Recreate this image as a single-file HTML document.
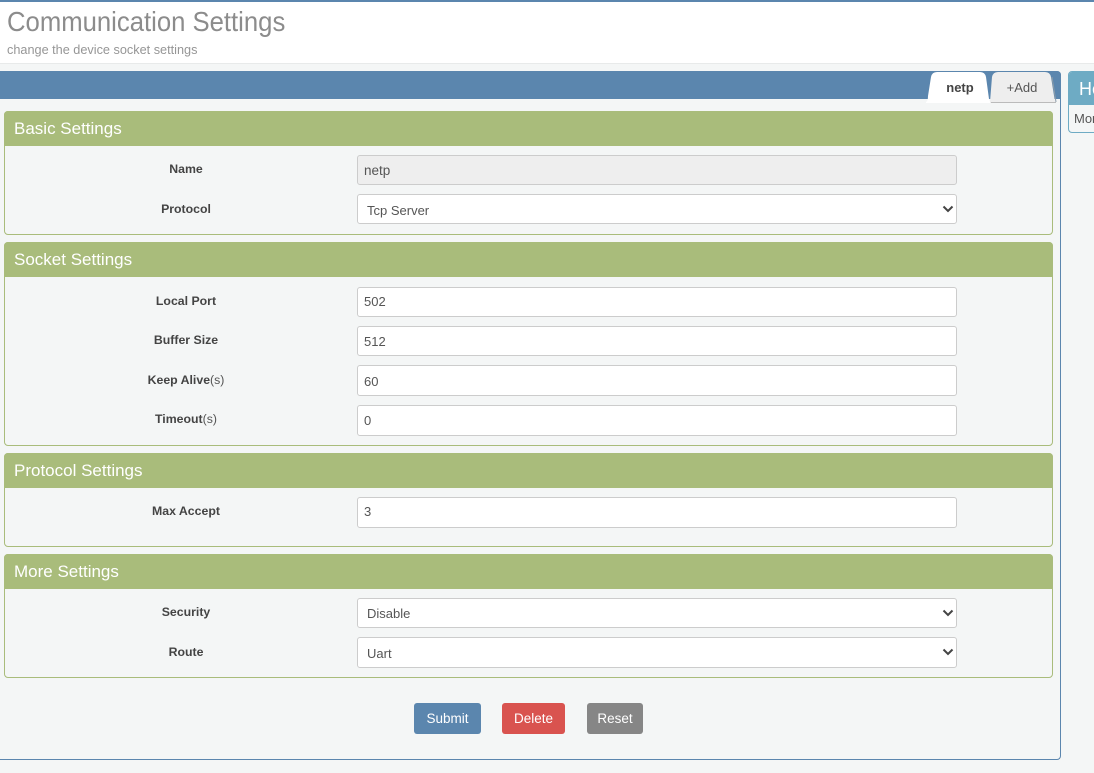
<!DOCTYPE html>
<html><head><meta charset="utf-8">
<style>
*{box-sizing:border-box}
html,body{margin:0;padding:0}
body{width:1094px;height:773px;position:relative;overflow:hidden;background:#f4f6f6;font-family:"Liberation Sans",sans-serif;color:#555}
.a{position:absolute}
.top{left:0;top:0;width:1094px;height:64px;background:#fff;border-top:2px solid #5b86ae;border-bottom:1px solid #e8eaea}
.title{left:7px;top:5px;font-size:28px;line-height:34px;color:#8c8c8c;white-space:nowrap;transform:scaleX(.917);transform-origin:0 0}
.sub{left:7px;top:42px;font-size:12.7px;line-height:17px;color:#969696;white-space:nowrap}
.main{left:-6px;top:71px;width:1067px;height:689px;border:1px solid #5b86ae;border-radius:4px}
.bar{left:0;top:71px;width:1061px;height:28px;background:#5b86ae;border-radius:0 4px 0 0}
.panel{position:absolute;left:4px;width:1049px;border:1px solid #a9bc7b;border-radius:4px}
.ph{position:absolute;left:-1px;top:-1px;width:1049px;height:35px;background:#a9bc7b;border-radius:4px 4px 0 0;color:#fff;font-size:17px;line-height:35px;padding-left:10px;white-space:nowrap}
.l{position:absolute;left:0;width:372px;text-align:center;font-size:12.3px;font-weight:bold;color:#444;line-height:16px;white-space:nowrap}
.l span{font-weight:normal;color:#555}
.f{position:absolute;left:357px;width:600px;height:30px;background:#fff;border:1px solid #ccc;border-radius:3px;font-size:13px;line-height:29px;padding-left:6px;color:#555}
.f.d{background:#eee;font-size:13.5px}
.f.s{padding-left:9px;line-height:31px}
.f svg{position:absolute;right:2px;top:9px}
.btn{position:absolute;top:703px;height:31px;border-radius:3px;color:#fff;font-size:13.5px;line-height:31px;text-align:center}
</style></head><body>
<div class="a top"></div>
<div class="a title">Communication Settings</div>
<div class="a sub">change the device socket settings</div>
<div class="a main"></div>
<div class="a bar"></div>

<svg class="a" style="left:925px;top:71px" width="135" height="33" viewBox="0 0 135 33">
<path d="M65 31 L67 6 Q68 1 73 1 L120 1 Q125 1 126 6 L130 31 L131 32 L65 32 Z" fill="#eee"/>
<path d="M127 6 L131 31" fill="none" stroke="#8a9aa8" stroke-width="1"/>
<path d="M66 31.5 L131 31.5" fill="none" stroke="#bbb" stroke-width="1"/>
<path d="M1 31 Q3 30 3 25 L6 6 Q7 1 12 1 L55 1 Q60 1 61 6 L64 28 Q65 30 65 31 L65 32 L1 32 Z" fill="#fff"/>
</svg>
<div class="a" style="left:925px;top:80px;width:70px;text-align:center;font-size:13px;font-weight:bold;color:#444;line-height:16px">netp</div>
<div class="a" style="left:990px;top:80px;width:64px;text-align:center;font-size:13px;color:#555;line-height:16px">+Add</div>

<div class="panel" style="top:111px;height:124px"><div class="ph">Basic Settings</div></div>
<div class="panel" style="top:242px;height:204px"><div class="ph">Socket Settings</div></div>
<div class="panel" style="top:453px;height:94px"><div class="ph">Protocol Settings</div></div>
<div class="panel" style="top:554px;height:124px"><div class="ph">More Settings</div></div>

<div class="l" style="top:161px">Name</div>
<div class="l" style="top:201px">Protocol</div>
<div class="l" style="top:293px">Local Port</div>
<div class="l" style="top:332px">Buffer Size</div>
<div class="l" style="top:372px">Keep Alive<span>(s)</span></div>
<div class="l" style="top:411px">Timeout<span>(s)</span></div>
<div class="l" style="top:503px">Max Accept</div>
<div class="l" style="top:604px">Security</div>
<div class="l" style="top:644px">Route</div>

<div class="f d" style="top:155px;line-height:30px">netp</div>
<div class="f s" style="top:194px">Tcp Server<svg width="12" height="10" viewBox="0 0 12 10"><path d="M1.5 2.5 L6 7 L10.5 2.5" fill="none" stroke="#444" stroke-width="2"/></svg></div>
<div class="f" style="top:287px;line-height:27px">502</div>
<div class="f" style="top:326px;line-height:30px">512</div>
<div class="f" style="top:365px;height:31px;line-height:31px">60</div>
<div class="f" style="top:405px;height:31px;line-height:30px">0</div>
<div class="f" style="top:497px;height:31px;line-height:28px">3</div>
<div class="f s" style="top:598px;line-height:29px">Disable<svg width="12" height="10" viewBox="0 0 12 10"><path d="M1.5 2.5 L6 7 L10.5 2.5" fill="none" stroke="#444" stroke-width="2"/></svg></div>
<div class="f s" style="top:637px;height:31px">Uart<svg width="12" height="10" viewBox="0 0 12 10"><path d="M1.5 2.5 L6 7 L10.5 2.5" fill="none" stroke="#444" stroke-width="2"/></svg></div>

<div class="btn" style="left:414px;width:67px;background:#5b86ae">Submit</div>
<div class="btn" style="left:502px;width:63px;background:#d9534f">Delete</div>
<div class="btn" style="left:587px;width:56px;background:#868686">Reset</div>

<div class="a" style="left:1068px;top:71px;width:40px;height:62px;border:1px solid #6eabc4;border-radius:4px;overflow:hidden">
<div style="height:34px;margin:-1px 0 0 -1px;width:42px;background:#6eabc4;color:#fff;font-size:18px;line-height:36px;padding-left:11px;white-space:nowrap">Help</div>
<div style="font-size:13px;line-height:28px;padding-left:5px;color:#555;white-space:nowrap">More</div>
</div>
</body></html>
